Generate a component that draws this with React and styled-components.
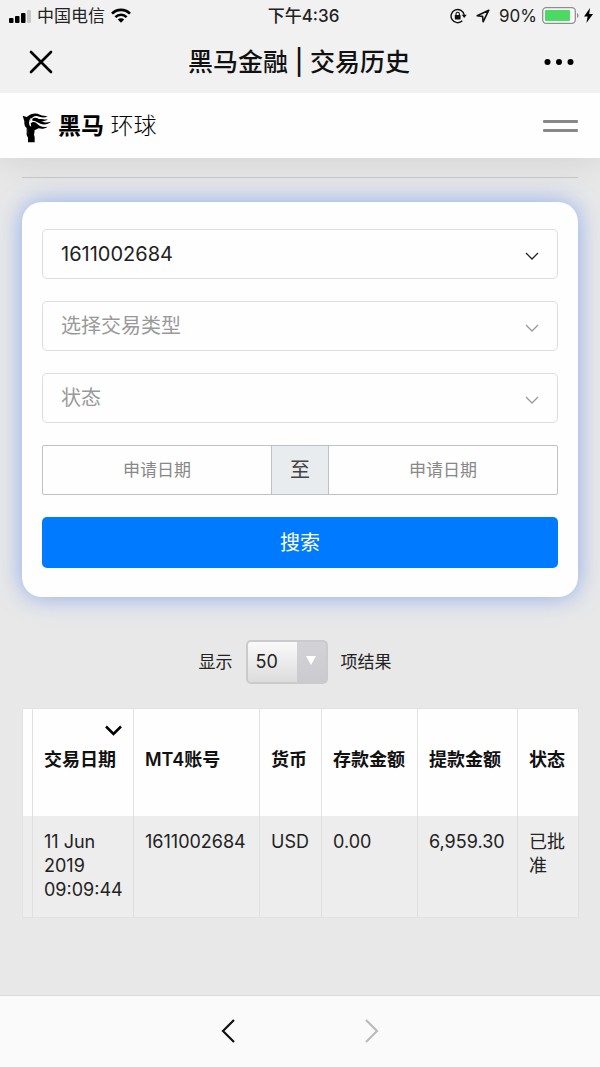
/* eslint-disable react/prop-types */
import React, { useState } from 'react';
import styled, { createGlobalStyle } from 'styled-components';

const GlobalStyle = createGlobalStyle`
* {
  box-sizing: border-box;
}
body {
  margin: 0;
  background: #e8e8e8;
  color: #222;
  font-family: Inter, 'Noto Sans CJK SC', sans-serif;
  font-size: 17px;
  line-height: 24px;
}
button, input, select {
  font: inherit;
  color: inherit;
}
button {
  padding: 0;
  border: 0;
  background: none;
  cursor: pointer;
}
svg {
  display: block;
  flex: none;
}
`;

const Page = styled.div`
display: flex;
flex-direction: column;
min-height: 100vh;
`;

// keeps the header shadow from falling on the phone chrome
const Chrome = styled.div`
position: relative;
z-index: 1;
background: #f1f1f1;
`;

const StatusBar = styled.div`
display: grid;
grid-template-columns: 1fr auto 1fr;
align-items: center;
height: 31px;
padding: 0 7px 0 8px;
`;

const StatusGroup = styled.div`
display: flex;
align-items: center;
gap: ${({ gap }) => gap}px;
justify-content: ${({ end }) => (end ? 'flex-end' : 'flex-start')};
`;

const Time = styled.div`
font-weight: 500;
padding-left: 6px;
`;

const TitleBar = styled.header`
display: flex;
align-items: center;
justify-content: space-between;
height: 62px;
padding: 0 26px 0 28px;
`;

const Title = styled.h1`
margin: 0;
font-size: 25px;
line-height: 32px;
font-weight: 500;
color: #111;
`;

const SiteHeader = styled.nav`
position: relative;
display: flex;
align-items: center;
justify-content: space-between;
height: 65px;
padding: 0 22px;
background: #fefefe;
box-shadow: 0 0 40px rgba(0, 0, 0, 0.12);
`;

const Brand = styled.a`
display: flex;
align-items: center;
gap: 6px;
color: #000;
font-size: 23px;
line-height: 32px;
font-weight: 300;
text-decoration: none;
`;

const BrandStrong = styled.b`
font-weight: 700;
`;

const MenuButton = styled.button`
display: flex;
flex-direction: column;
gap: 6px;
width: 35px;

&::before, &::after {
  content: '';
  height: 3px;
  border-radius: 1px;
  background: #888;
}
`;

const Main = styled.main`
flex: 1;
padding: 19px 22px 32px;
`;

const Divider = styled.hr`
margin: 0 0 24px;
border: 0;
border-top: 1px solid #cacaca;
`;

const SearchCard = styled.form`
display: flex;
flex-direction: column;
gap: 22px;
padding: 27px 20px 29px;
border-radius: 20px;
background: #fefefe;
box-shadow: 0 0 24px rgba(80, 132, 240, 0.6);
`;

const SelectBox = styled.div`
position: relative;
color: ${({ filled }) => (filled ? '#222' : '#999')};

svg {
  position: absolute;
  top: 20px;
  right: 19px;
  pointer-events: none;
}
`;

const Select = styled.select`
display: block;
appearance: none;
width: 100%;
height: 50px;
padding: 0 40px 0 18px;
border: 1px solid #dedede;
border-radius: 5px;
background: transparent;
font-size: 20px;
`;

const DateRange = styled.div`
display: flex;
height: 50px;
border: 1px solid #bfc2c5;
border-radius: 2px;
`;

const DateInput = styled.input`
flex: 1;
min-width: 0;
border: 0;
background: transparent;
text-align: center;

&::placeholder {
  color: #888;
  opacity: 1;
}
`;

const RangeLabel = styled.span`
display: flex;
align-items: center;
justify-content: center;
width: 58px;
border: solid #bfc2c5;
border-width: 0 1px;
background: #e9ecef;
color: #444;
font-size: 20px;
`;

const SearchButton = styled.button`
height: 51px;
border-radius: 5px;
background: #007bff;
color: #fff;
font-size: 20px;
`;

const PageSize = styled.label`
display: flex;
align-items: center;
justify-content: center;
gap: 13px;
margin: 43px 0 24px;
padding-right: 10px;
`;

const SizeBox = styled.span`
position: relative;

svg {
  position: absolute;
  top: 16px;
  right: 11px;
  pointer-events: none;
}
`;

const SizeSelect = styled.select`
display: block;
appearance: none;
width: 82px;
height: 44px;
padding: 0 8px;
border: 2px solid #cbcbce;
border-radius: 5px;
background:
  linear-gradient(#d3d3d7, #cacacf) right / 29px 100% no-repeat,
  linear-gradient(#fafafa, #dcdcdc);
font-size: 18px;
`;

const Table = styled.table`
width: 100%;
table-layout: fixed;
border-collapse: collapse;
border: 1px solid #e2e2e2;
font-size: 18px;
`;

const HeadCell = styled.th`
position: relative;
height: 107px;
padding: 0 0 4px 11px;
border-right: 1px solid #e2e2e2;
background: #fefefe;
color: #111;
font-weight: 600;
text-align: left;
white-space: nowrap;
`;

const SortButton = styled.button`
position: absolute;
top: 16px;
right: 11px;
`;

const Cell = styled.td`
height: 102px;
padding: 14px 8px 0 11px;
border-right: 1px solid #dfdfdf;
background: #ededed;
vertical-align: top;
`;

const BottomBar = styled.footer`
display: flex;
align-items: center;
justify-content: center;
gap: 128px;
height: 72px;
padding-bottom: 2px;
border-top: 1px solid #dadada;
background: #fafafa;
`;

const SignalIcon = () => (
  <svg width="23" height="14" viewBox="0 0 23 14">
    <rect x="1" y="9" width="4.500" height="5" rx="1" />
    <rect x="7" y="7" width="4.500" height="7" rx="1" />
    <rect x="13" y="4" width="4.500" height="10" rx="1" />
    <rect x="19" y="1" width="4" height="13" rx="1" fill="#c8c8c8" />
  </svg>
);

const WifiIcon = () => (
  <svg width="20" height="15" viewBox="0 0 20 15">
    <g fill="none" stroke="#000" strokeWidth="2.6">
      <path d="M1 5.6C6 .6 14 .6 19 5.6" />
      <path d="M4.4 9.1c3.1-3.1 8.1-3.1 11.2 0" />
    </g>
    <path d="M6.8 11.5a4.6 4.6 0 0 1 6.4 0L10 14.8z" />
  </svg>
);

const RotationLockIcon = () => (
  <svg width="17" height="16" viewBox="0 0 17 16" fill="none" stroke="#111" strokeWidth="1.4">
    <path d="M12.3 12.8A6.6 6.6 0 1 1 14.2 7" />
    <path d="M11.7 6.8h5l-2.5 3.2z" fill="#111" stroke="none" />
    <rect x="4.8" y="7" width="5.8" height="4.4" rx=".6" fill="#111" stroke="none" />
    <path d="M6 7.4V6a1.7 1.7 0 0 1 3.4 0v1.4" strokeWidth="1.1" />
  </svg>
);

const LocationIcon = () => (
  <svg width="14" height="14" viewBox="0 0 14 14" fill="none" stroke="#111" strokeWidth="1.6" strokeLinejoin="round">
    <path d="M12.8 1.2 1.2 6.8l5.4.6.5 5.4z" />
  </svg>
);

const BatteryIcon = () => (
  <svg width="37" height="17" viewBox="0 0 37 17">
    <rect x=".7" y=".7" width="32.6" height="15.6" rx="3.5" fill="#fafafa" stroke="#8e8e8e" strokeWidth="1.3" />
    <rect x="3" y="3" width="25" height="11" rx="1" fill="#4cd964" />
    <path d="M35 6c2 .8 2 4.2 0 5z" fill="#8e8e8e" />
  </svg>
);

const BoltIcon = () => (
  <svg width="9" height="15" viewBox="0 0 9 15">
    <path d="M6 0 0 8.5h3.6L2.4 15 9 6H5.2z" />
  </svg>
);

const HorseIcon = () => (
  <svg width="30" height="34" viewBox="0 -12 90 102">
    <path d="M2 8l12 4 8-5 12 2-6 8c-5 7-7 15-4 22l8 4 12 1-6 8-2 14 2 6v16H18V74l-4-8V45c-5-3-8-10-7-20z" />
    <path d="M20 9C29 0 44 0 54 5c8 4 15 2 23 6-9 3-17 3-25 0-8-3-16-2-22 3z" />
    <path d="M31 17c8-5 16-3 22 4 9 9 20 8 35 5-9 7-21 11-33 6-8-3-13-9-24-9z" />
    <path d="M26 31c9-8 16-3 21 3 8 8 17 9 30 7-8 6-17 8-27 5l-9 4-13-6z" />
    <path d="M44 20c12-6 22 2 34-1-9 7-19 7-27 5z" />
    <path d="M28 15c-6 7-7 15-3 23" fill="none" stroke="#fff" strokeWidth="3" />
    <path d="M15 48l4 14" fill="none" stroke="#777" strokeWidth="1" />
  </svg>
);

const CaretIcon = () => (
  <svg width="14" height="14" viewBox="0 0 14 14" fill="none" stroke="currentColor" strokeWidth="1.3">
    <path d="M1 4l6 6 6-6" />
  </svg>
);

const accounts = ['1611002684'];

// widths keep their proportions when the table grows
const columns = [
  { title: '', width: 10 },
  { title: '交易日期', width: 101, sortable: true },
  { title: 'MT4账号', width: 126 },
  { title: '货币', width: 62 },
  { title: '存款金额', width: 96 },
  { title: '提款金额', width: 100 },
  { title: '状态', width: 61 },
];

const rows = [
  ['', '11 Jun 2019 09:09:44', '1611002684', 'USD', '0.00', '6,959.30', '已批准'],
];

const App = () => {
  const [type, setType] = useState('');
  const [status, setStatus] = useState('');

  return (
    <Page>
      <GlobalStyle />
      <Chrome>
        <StatusBar>
          <StatusGroup gap={6}>
            <SignalIcon />
            <span>中国电信</span>
            <WifiIcon />
          </StatusGroup>
          <Time>下午4:36</Time>
          <StatusGroup gap={9} end>
            <RotationLockIcon />
            <LocationIcon />
            <StatusGroup gap={5}>
              <span>90%</span>
              <BatteryIcon />
              <BoltIcon />
            </StatusGroup>
          </StatusGroup>
        </StatusBar>
        <TitleBar>
          <button type="button" aria-label="关闭">
            <svg width="26" height="26" viewBox="0 0 26 26" stroke="#000" strokeWidth="2.6" strokeLinecap="round">
              <path d="M3 3l20 20M23 3L3 23" />
            </svg>
          </button>
          <Title>黑马金融 | 交易历史</Title>
          <button type="button" aria-label="更多">
            <svg width="30" height="8" viewBox="0 0 30 8">
              <circle cx="3.5" cy="4" r="3" />
              <circle cx="15" cy="4" r="3" />
              <circle cx="26.5" cy="4" r="3" />
            </svg>
          </button>
        </TitleBar>
      </Chrome>
      <SiteHeader>
        <Brand href="#home">
          <HorseIcon />
          <span>
            <BrandStrong>黑马</BrandStrong>
            {' 环球'}
          </span>
        </Brand>
        <MenuButton type="button" aria-label="菜单" />
      </SiteHeader>
      <Main>
        <Divider />
        <SearchCard onSubmit={(e) => e.preventDefault()}>
          <SelectBox filled>
            <Select aria-label="账号">
              {accounts.map((account) => <option key={account}>{account}</option>)}
            </Select>
            <CaretIcon />
          </SelectBox>
          <SelectBox filled={type !== ''}>
            <Select aria-label="交易类型" value={type} onChange={(e) => setType(e.target.value)}>
              <option value="">选择交易类型</option>
              <option value="deposit">存款</option>
              <option value="withdrawal">提款</option>
            </Select>
            <CaretIcon />
          </SelectBox>
          <SelectBox filled={status !== ''}>
            <Select aria-label="状态" value={status} onChange={(e) => setStatus(e.target.value)}>
              <option value="">状态</option>
              <option value="approved">已批准</option>
            </Select>
            <CaretIcon />
          </SelectBox>
          <DateRange>
            <DateInput type="text" aria-label="开始申请日期" placeholder="申请日期" />
            <RangeLabel>至</RangeLabel>
            <DateInput type="text" aria-label="结束申请日期" placeholder="申请日期" />
          </DateRange>
          <SearchButton type="submit">搜索</SearchButton>
        </SearchCard>
        <PageSize>
          显示
          <SizeBox>
            <SizeSelect defaultValue="50">
              <option>10</option>
              <option>25</option>
              <option>50</option>
            </SizeSelect>
            <svg width="12" height="9" viewBox="0 0 12 9">
              <path d="M1 0h10L6 9z" fill="#fff" />
            </svg>
          </SizeBox>
          项结果
        </PageSize>
        <Table>
          <colgroup>
            {columns.map(({ title, width }) => <col key={title} style={{ width }} />)}
          </colgroup>
          <thead>
            <tr>
              {columns.map(({ title, sortable }) => (
                <HeadCell key={title}>
                  {title}
                  {sortable ? (
                    <SortButton type="button" aria-label="排序">
                      <svg width="17" height="11" viewBox="0 0 17 11" fill="none" stroke="#000" strokeWidth="2.5">
                        <path d="M1 1.5l7.5 7.5L16 1.5" />
                      </svg>
                    </SortButton>
                  ) : ''}
                </HeadCell>
              ))}
            </tr>
          </thead>
          <tbody>
            {rows.map((row) => (
              <tr key={row[1]}>
                {row.map((value, i) => <Cell key={columns[i].title}>{value}</Cell>)}
              </tr>
            ))}
          </tbody>
        </Table>
      </Main>
      <BottomBar>
        <button type="button" aria-label="后退">
          <svg width="16" height="26" viewBox="0 0 16 26" fill="none" stroke="#111" strokeWidth="2.2">
            <path d="M14 2L3 13l11 11" />
          </svg>
        </button>
        <button type="button" aria-label="前进" disabled>
          <svg width="16" height="26" viewBox="0 0 16 26" fill="none" stroke="#bbb" strokeWidth="2.2">
            <path d="M2 2l11 11L2 24" />
          </svg>
        </button>
      </BottomBar>
    </Page>
  );
};

export default App;
